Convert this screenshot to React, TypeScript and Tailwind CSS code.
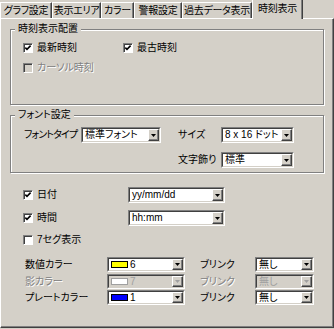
import React from "react";

const BG = "bg-[#d4d0c8]";

function Tab({ label, w, active }: { label: string; w: string; active?: boolean }) {
  if (active) {
    return (
      <div
        className={`relative z-10 ${w} h-[20px] -mb-px ${BG} border-l border-t border-l-white border-t-white border-r border-r-[#404040] shadow-[inset_-1px_0_0_#808080] flex items-center justify-center pb-[2px] tracking-[-0.3px]`}
      >
        {label}
      </div>
    );
  }
  return (
    <div
      className={`${w} h-[16px] ${BG} border-l border-t border-l-white border-t-white border-r border-r-[#404040] shadow-[inset_-1px_0_0_#808080] flex items-center justify-center tracking-[-0.3px]`}
    >
      {label}
    </div>
  );
}

function Check({ checked, disabled }: { checked?: boolean; disabled?: boolean }) {
  return (
    <span
      className={`relative block w-[10px] h-[10px] shrink-0 border border-t-[#808080] border-l-[#808080] border-b-white border-r-white shadow-[inset_1px_1px_0_#404040] ${
        disabled ? "bg-[#d4d0c8]" : "bg-white"
      }`}
    >
      {checked && (
        <svg width="8" height="8" viewBox="0 0 8 8" className="absolute left-0 top-0">
          <polyline points="1.3,3.6 3,5.4 6.6,1.6" fill="none" stroke="#000" strokeWidth="1.6" />
        </svg>
      )}
    </span>
  );
}

function Combo({
  w,
  h,
  text,
  swatch,
  disabled,
}: {
  w: string;
  h: string;
  text: string;
  swatch?: string;
  disabled?: boolean;
}) {
  return (
    <div className={`${w} ${h} shrink-0 border border-t-[#808080] border-l-[#808080] border-r-white border-b-white`}>
      <div className="h-full border border-t-[#404040] border-l-[#404040] border-r-[#d4d0c8] border-b-[#d4d0c8] flex">
        <div
          className={`flex-1 flex items-center pl-[2px] leading-none overflow-hidden whitespace-nowrap ${
            disabled ? "bg-[#d4d0c8] text-[#a0a0a0]" : "bg-white text-black"
          }`}
        >
          {swatch && (
            <span
              className={`block w-[17px] h-[7px] mr-[2px] border ${
                disabled ? "border-[#a0a0a0]" : "border-black"
              } ${swatch}`}
            />
          )}
          {text}
        </div>
        <div className={`w-[11px] h-full ${BG} border-l border-t border-l-white border-t-white border-r border-b border-r-[#404040] border-b-[#404040] shadow-[inset_-1px_-1px_0_#808080] flex items-center justify-center`}>
          <svg width="5" height="3" viewBox="0 0 5 3">
            <polygon points="0,0 5,0 2.5,3" fill={disabled ? "#a0a0a0" : "#000"} />
          </svg>
        </div>
      </div>
    </div>
  );
}

function GroupBox({
  title,
  h,
  mt,
  children,
}: {
  title: string;
  h: string;
  mt: string;
  children: React.ReactNode;
}) {
  return (
    <div
      className={`relative w-[314px] ${h} ${mt} border border-[#808080] shadow-[inset_1px_1px_0_#fff,1px_1px_0_#fff]`}
    >
      <div className={`absolute left-[4px] top-[-7px] px-[3px] ${BG} leading-[12px]`}>{title}</div>
      {children}
    </div>
  );
}

export default function App() {
  return (
    <div
      className={`w-[334px] h-[329px] ${BG} text-[10px] leading-[12px] text-black whitespace-nowrap font-['Liberation_Sans','Noto_Sans_CJK_JP',sans-serif] [font-feature-settings:'palt'] overflow-hidden`}
    >
      {/* Tabs */}
      <div className="flex items-end h-[18px]">
        <Tab label="グラフ設定" w="w-[52px]" />
        <Tab label="表示エリア" w="w-[49px]" />
        <Tab label="カラー" w="w-[33px]" />
        <Tab label="警報設定" w="w-[48px]" />
        <Tab label="過去データ表示" w="w-[70px]" />
        <Tab label="時刻表示" w="w-[51px]" active />
      </div>

      {/* Panel */}
      <div className="h-[310px] border-l border-t border-l-white border-t-white border-r border-b border-r-[#404040] border-b-[#404040] shadow-[inset_-1px_-1px_0_#808080] pl-[9px] pt-[10px]">
        <GroupBox title="時刻表示配置" h="h-[76px]" mt="mt-0">
          <div className="pl-[12px] pt-[12px] flex flex-col gap-[8px]">
            <div className="flex h-[12px] items-center">
              <div className="w-[100px] flex items-center gap-[4px]">
                <Check checked />
                <span>最新時刻</span>
              </div>
              <div className="flex items-center gap-[4px]">
                <Check checked />
                <span>最古時刻</span>
              </div>
            </div>
            <div className="flex h-[12px] items-center gap-[4px]">
              <Check disabled />
              <span className="text-[#808080] [text-shadow:1px_1px_0_#fff]">カーソル時刻</span>
            </div>
          </div>
        </GroupBox>

        <GroupBox title="フォント設定" h="h-[58px]" mt="mt-[10px]">
          <div className="pl-[13px] pt-[11px] flex flex-col gap-[9px]">
            <div className="flex h-[16px] items-center">
              <span className="w-[57px] tracking-[-0.9px]">フォントタイプ</span>
              <Combo w="w-[80px]" h="h-[16px]" text="標準フォント" />
              <span className="ml-[17px] w-[43px]">サイズ</span>
              <Combo w="w-[73px]" h="h-[16px]" text="8 x 16 ドット" />
            </div>
            <div className="flex h-[16px] items-center">
              <span className="ml-[154px] w-[43px]">文字飾り</span>
              <Combo w="w-[73px]" h="h-[16px]" text="標準" />
            </div>
          </div>
        </GroupBox>

        <div className="pl-[13px] mt-[14px] flex flex-col">
          <div className="flex h-[16px] items-center">
            <div className="w-[105px] flex items-center gap-[4px]">
              <Check checked />
              <span>日付</span>
            </div>
            <Combo w="w-[97px]" h="h-[16px]" text="yy/mm/dd" />
          </div>
          <div className="flex h-[16px] items-center mt-[7px]">
            <div className="w-[105px] flex items-center gap-[4px]">
              <Check checked />
              <span>時間</span>
            </div>
            <Combo w="w-[97px]" h="h-[16px]" text="hh:mm" />
          </div>
          <div className="flex h-[12px] items-center gap-[4px] mt-[8px]">
            <Check />
            <span>7セグ表示</span>
          </div>
        </div>

        <div className="pl-[15px] mt-[11px] flex flex-col">
          <div className="flex h-[15px] items-center">
            <span className="w-[82px]">数値カラー</span>
            <Combo w="w-[78px]" h="h-[15px]" text="6" swatch="bg-[#ffff00]" />
            <span className="ml-[15px] w-[55px]">ブリンク</span>
            <Combo w="w-[59px]" h="h-[15px]" text="無し" />
          </div>
          <div className="flex h-[15px] items-center mt-[2px] text-[#808080]">
            <span className="w-[82px] [text-shadow:1px_1px_0_#fff]">影カラー</span>
            <Combo w="w-[78px]" h="h-[15px]" text="7" swatch="bg-white" disabled />
            <span className="ml-[15px] w-[55px] [text-shadow:1px_1px_0_#fff]">ブリンク</span>
            <Combo w="w-[59px]" h="h-[15px]" text="無し" disabled />
          </div>
          <div className="flex h-[15px] items-center mt-[1px]">
            <span className="w-[82px]">プレートカラー</span>
            <Combo w="w-[78px]" h="h-[15px]" text="1" swatch="bg-[#0000ff]" />
            <span className="ml-[15px] w-[55px]">ブリンク</span>
            <Combo w="w-[59px]" h="h-[15px]" text="無し" />
          </div>
        </div>
      </div>
    </div>
  );
}
